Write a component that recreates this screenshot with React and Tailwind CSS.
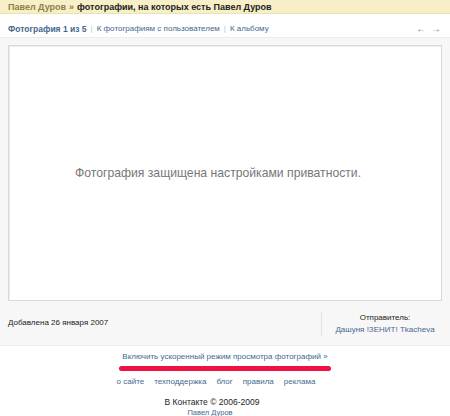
import React from "react";

const font = { fontFamily: "Tahoma, 'Liberation Sans', Arial, sans-serif" };

function Sep() {
  return <span className="text-[#b9c4d0] mx-[4px]">|</span>;
}

export default function App() {
  return (
    <div
      className="w-[450px] h-[416px] bg-white text-[8px] leading-[10px] text-[#222] overflow-hidden"
      style={font}
    >
      {/* breadcrumb bar */}
      <div className="h-[14px] bg-[#f6efc8] border-b border-[#ece2ae] px-[8px] flex items-center font-bold text-[9px]">
        <span className="text-[#8b7f49]">Павел Дуров</span>
        <span className="text-[#8b7f49] mx-[3px]">»</span>
        <span>фотографии, на которых есть Павел Дуров</span>
      </div>

      {/* photo navigation */}
      <div className="h-[22px] mt-[1px] pt-[5px] px-[8px] flex items-center justify-between">
        <div className="flex items-center text-[#45688e]">
          <span className="font-bold text-[8.5px]">Фотография 1 из 5</span>
          <Sep />
          <span>К фотографиям с пользователем</span>
          <Sep />
          <span>К альбому</span>
        </div>
        <div className="text-[#7a7a7a] text-[10px] tracking-[1px]">← →</div>
      </div>

      {/* photo area */}
      <div className="bg-[#f7f7f7] border-t border-[#ececec] border-b border-[#e4e4e4] h-[309px] px-[8px] pt-[7px]">
        <div className="h-[256px] bg-white border border-[#d9d9d9] shadow-[inset_1px_1px_0_#ededed] flex items-center justify-center pr-[14px]">
          <span className="text-[12.2px] text-[#777]">
            Фотография защищена настройками приватности.
          </span>
        </div>
        <div className="flex items-center h-[36px] mt-[5px]">
          <div className="flex-1 mt-[-2px]">Добавлена 26 января 2007</div>
          <div className="w-px h-[24px] bg-[#e2e2e2]" />
          <div className="w-[120px] flex flex-col items-center gap-[2px] pl-[6px]">
            <span>Отправитель:</span>
            <span className="text-[#45688e]">Дашуня !ЗЕНИТ! Tkacheva</span>
          </div>
        </div>
      </div>

      {/* fast view toggle */}
      <div className="h-[20px] pt-[2px] flex items-center justify-center text-[#45688e]">
        Включить ускоренный режим просмотра фотографий »
      </div>
      <div className="flex justify-center">
        <div className="w-[212px] h-[5px] rounded-full bg-[#ee1144]" />
      </div>

      {/* footer */}
      <div className="flex justify-center gap-[10px] mt-[6px] pr-[18px] text-[#45688e]">
        <span>о сайте</span>
        <span>техподдержка</span>
        <span>блог</span>
        <span>правила</span>
        <span>реклама</span>
      </div>
      <div className="text-center mt-[10px] pr-[26px] text-[8.5px]">В Контакте © 2006-2009</div>
      <div className="text-center text-[7.5px] leading-[9px] mt-[1px] pr-[30px] text-[#45688e]">Павел Дуров</div>
    </div>
  );
}
